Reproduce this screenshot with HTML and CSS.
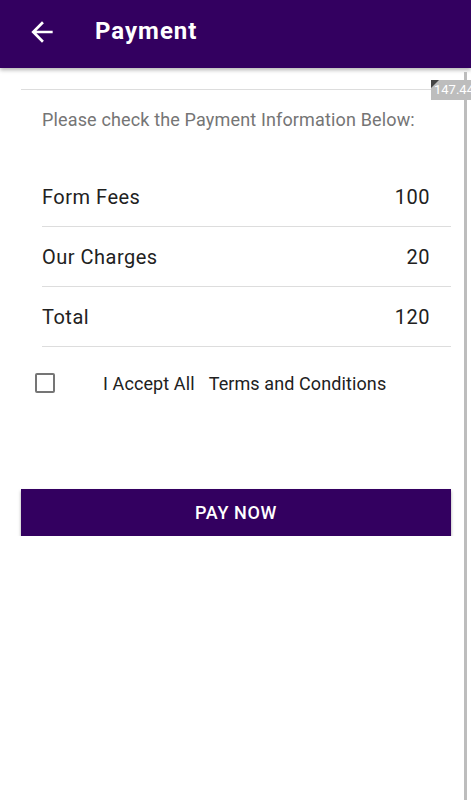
FILE: index.html
```html
<!DOCTYPE html>
<html>
<head>
    <title>Payment</title>
    <link rel="stylesheet" href="styles.css">
</head>
<body>
    <header class="app-bar">
        <svg class="back" width="32" height="32" viewBox="0 0 24 24">
            <path d="M20 11H7.83l5.59-5.59L12 4l-8 8 8 8 1.41-1.41L7.83 13H20v-2z" fill="#fff"/>
        </svg>
        <h1>Payment</h1>
    </header>

    <main class="content">
        <hr class="top-rule">
        <p class="intro">Please check the Payment Information Below:</p>
        <ul class="charges">
            <li><span>Form Fees</span><span>100</span></li>
            <li><span>Our Charges</span><span>20</span></li>
            <li><span>Total</span><span>120</span></li>
        </ul>
        <label class="accept">
            <span class="box"></span>
            <span class="accept-text">I Accept All</span>
            <span class="terms">Terms and Conditions</span>
        </label>
        <button class="pay">PAY NOW</button>
    </main>

    <div class="scrollbar"></div>
    <div class="badge">147.44</div>
</body>
</html>
```

FILE: styles.css
```css
html,
body {
    margin: 0;
    padding: 0;
    font-family: Roboto, "Noto Sans", sans-serif;
    background: #fff;
    color: #212121;
}
.app-bar {
    height: 68px;
    background: #330060;
    display: flex;
    align-items: center;
    box-shadow: 0 2px 4px rgba(0, 0, 0, 0.3);
    position: relative;
}
.back {
    margin-left: 26px;
    margin-top: -5px;
}
.app-bar h1 {
    margin: -7px 0 0 37px;
    color: #fff;
    font-size: 24px;
    font-weight: 700;
    letter-spacing: 1px;
}
.content {
    margin: 0 20px 0 21px;
    padding-top: 21px;
}
.top-rule {
    margin: 0;
    border: 0;
    border-top: 1px solid #ddd;
}
.intro {
    margin: 0;
    padding: 20px 0 0 21px;
    height: 57px;
    font-size: 18px;
    line-height: 20px;
    letter-spacing: 0.15px;
    color: #757575;
}
.charges {
    list-style: none;
    margin: 0 0 0 21px;
    padding: 0;
}
.charges li {
    display: flex;
    justify-content: space-between;
    height: 59px;
    align-items: center;
    padding-right: 21px;
    border-bottom: 1px solid #ddd;
    font-size: 20px;
    letter-spacing: 0.5px;
}
.accept {
    display: flex;
    align-items: center;
    height: 72px;
    font-size: 18px;
    letter-spacing: 0.1px;
    color: #212121;
}
.box {
    width: 16px;
    height: 16px;
    border: 2px solid #757575;
    border-radius: 2px;
    margin-left: 14px;
    margin-right: 48px;
}
.terms {
    margin-left: 14px;
}
.pay {
    display: block;
    width: 100%;
    height: 47px;
    margin-top: 70px;
    border: 0;
    background: #330060;
    color: #fff;
    font-family: Roboto, sans-serif;
    font-size: 18px;
    font-weight: 500;
    letter-spacing: 0.6px;
    box-shadow: 0 2px 3px rgba(0, 0, 0, 0.35);
}
.scrollbar {
    position: absolute;
    top: 72px;
    left: 464px;
    width: 3px;
    height: 728px;
    background: #bdbdbd;
}
.badge {
    position: absolute;
    top: 80px;
    left: 431px;
    width: 40px;
    height: 20px;
    overflow: hidden;
    white-space: nowrap;
    background: #bdbdbd;
    color: #fff;
    font-size: 13px;
    line-height: 20px;
    padding-left: 3px;
    box-sizing: border-box;
}
.badge::before {
    content: "";
    position: absolute;
    top: 0;
    left: 0;
    border-top: 8px solid #444;
    border-right: 8px solid transparent;
}
```
